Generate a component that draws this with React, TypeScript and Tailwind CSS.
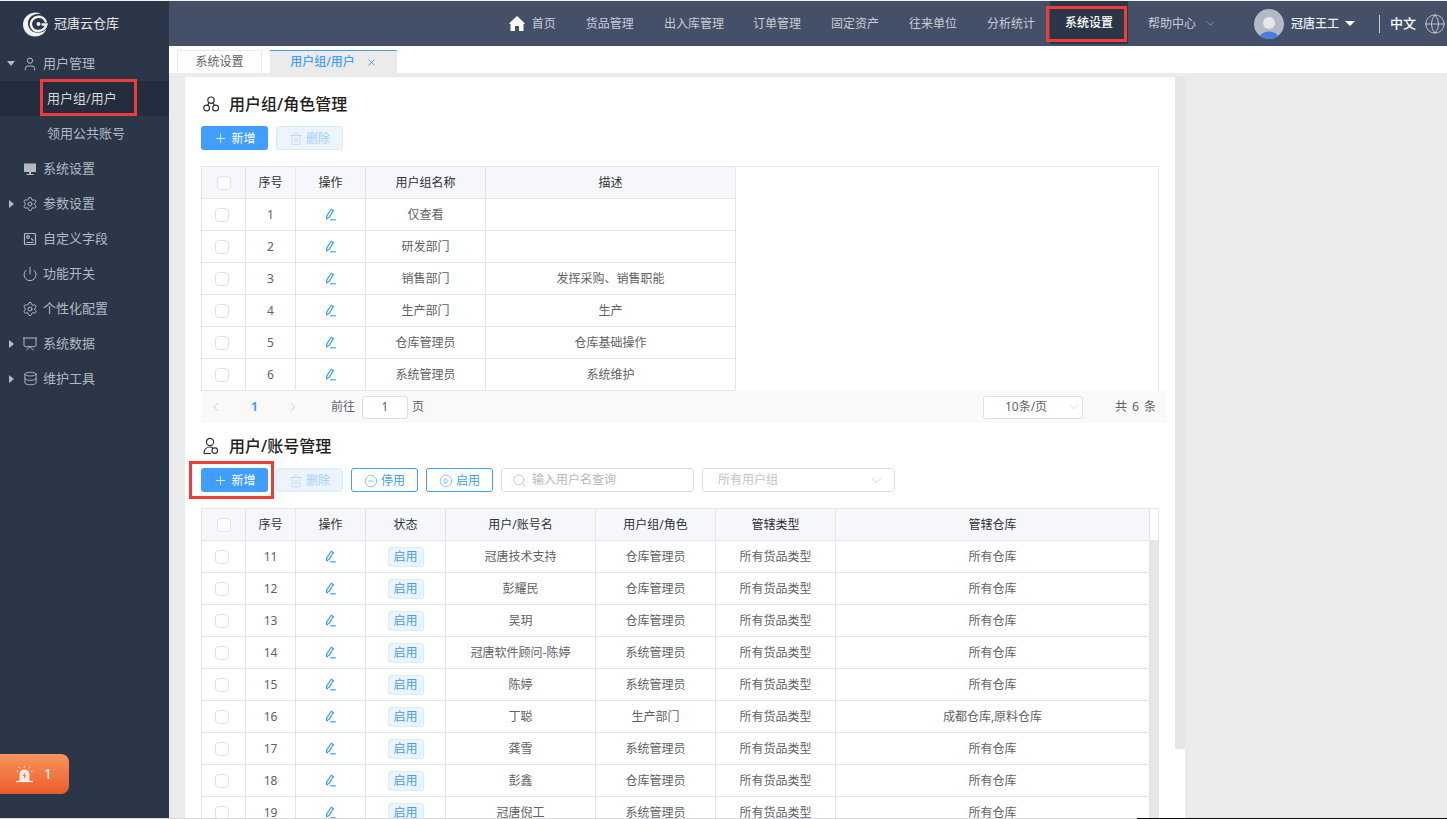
import {
  ChevronDown,
  ChevronLeft,
  ChevronRight,
  CircleMinus,
  CirclePlay,
  Database,
  Globe,
  Plus,
  Power,
  Presentation,
  Search,
  Settings,
  Trash2,
  User,
  X,
} from 'lucide-react'
import type { ReactNode } from 'react'

const NAV = ['货品管理', '出入库管理', '订单管理', '固定资产', '往来单位', '分析统计']

const GROUPS = [
  ['1', '仅查看', ''],
  ['2', '研发部门', ''],
  ['3', '销售部门', '发挥采购、销售职能'],
  ['4', '生产部门', '生产'],
  ['5', '仓库管理员', '仓库基础操作'],
  ['6', '系统管理员', '系统维护'],
]

const USERS = [
  ['11', '冠唐技术支持', '仓库管理员', '所有仓库'],
  ['12', '彭耀民', '仓库管理员', '所有仓库'],
  ['13', '吴玥', '仓库管理员', '所有仓库'],
  ['14', '冠唐软件顾问-陈婷', '系统管理员', '所有仓库'],
  ['15', '陈婷', '系统管理员', '所有仓库'],
  ['16', '丁聪', '生产部门', '成都仓库,原料仓库'],
  ['17', '龚雪', '系统管理员', '所有仓库'],
  ['18', '彭鑫', '仓库管理员', '所有仓库'],
  ['19', '冠唐倪工', '系统管理员', '所有仓库'],
]

function Logo() {
  return (
    <svg width="26" height="26" viewBox="0 0 26 26" fill="none" className="shrink-0">
      <path d="M19 2.5C10 -1 1 5 1 13.5C1 21 7 25.5 13 25.5C18.5 25.5 23 22.5 24.5 18C21 22 15 23 10.5 20.5C5.5 17.5 4.5 10 8.5 6C11.5 3 15.5 2.5 19 2.5Z" fill="#f2f2f2" />
      <path d="M24 11.5C23 7.5 19.5 5.5 16 5.8C11.5 6.2 8.5 10 9 14C9.5 18 13 20.5 17 20C20.5 19.5 23.5 17 24.5 13.5L19.5 13.5" stroke="#f2f2f2" strokeWidth="2.4" />
      <circle cx="16.5" cy="13" r="2" fill="#f2f2f2" />
    </svg>
  )
}

function MonitorIcon() {
  return (
    <svg width="14" height="14" viewBox="0 0 14 14" fill="#b4b9c2">
      <rect x="1" y="1.5" width="12" height="8.5" rx="0.5" />
      <rect x="6" y="10" width="2" height="2" />
      <rect x="3.5" y="12" width="7" height="1" />
    </svg>
  )
}

function FieldIcon() {
  return (
    <svg width="14" height="14" viewBox="0 0 14 14" fill="none" stroke="#b4b9c2" strokeWidth="1.2">
      <rect x="1.5" y="1.5" width="11" height="11" rx="1" />
      <circle cx="5" cy="5" r="1.3" />
      <path d="M3.5 10.5H10.5M8 6.5L10.5 8.5" />
    </svg>
  )
}

function EditIcon() {
  return (
    <svg width="13" height="13" viewBox="0 0 13 13" fill="none" stroke="#409eff" strokeWidth="1.2" className="mx-auto">
      <path d="M7.2 1.2L9.4 2.6L5 9.6L2.6 10.8L2.6 8.2Z" />
      <path d="M6.2 11.8H11.8" />
    </svg>
  )
}

function GroupIcon() {
  return (
    <svg width="18" height="18" viewBox="0 0 18 18" fill="none" stroke="#333" strokeWidth="1.2">
      <circle cx="9" cy="5.2" r="3.2" />
      <circle cx="4.6" cy="13" r="2.9" />
      <circle cx="13.6" cy="13" r="2.9" />
      <path d="M7 8L5.6 10.2M11 8L12.4 10.2" />
    </svg>
  )
}

function UserGroupIcon() {
  return (
    <svg width="18" height="18" viewBox="0 0 18 18" fill="none" stroke="#333" strokeWidth="1.2">
      <circle cx="8" cy="5" r="3.6" />
      <path d="M2 16.5C2 12.5 4.5 10 8 10C9 10 10 10.2 10.8 10.7" />
      <path d="M2 16.5H9" />
      <circle cx="12.8" cy="13.6" r="2.8" />
    </svg>
  )
}

function AlarmIcon() {
  return (
    <svg width="19" height="19" viewBox="0 0 19 19" fill="none">
      <path d="M4.5 16V9.5C4.5 6.7 6.7 4.5 9.5 4.5C12.3 4.5 14.5 6.7 14.5 9.5V16Z" fill="#fff" fillOpacity="0.85" />
      <path d="M10.2 7.5L7.8 11H9.4L8.8 14L11.2 10.4H9.6Z" fill="#ea5c2a" />
      <path d="M1 16.5H18" stroke="#fff" strokeWidth="1.2" />
      <path d="M9.5 0.5V2.5M4 2L5 3.6M15 2L14 3.6M1.5 6L3 7M17.5 6L16 7" stroke="#fff" strokeOpacity="0.8" strokeWidth="1" />
    </svg>
  )
}

function Avatar() {
  return (
    <svg width="30" height="30" viewBox="0 0 30 30" className="shrink-0">
      <clipPath id="avatar-clip">
        <circle cx="15" cy="15" r="15" />
      </clipPath>
      <g clipPath="url(#avatar-clip)">
        <rect width="30" height="30" fill="#b3b9c6" />
        <circle cx="15" cy="14" r="6" fill="#e6e7eb" />
        <ellipse cx="15" cy="30" rx="10" ry="7.5" fill="#4a7de0" />
      </g>
    </svg>
  )
}

function Caret({ open }: { open?: boolean }) {
  return (
    <span
      className={
        open
          ? 'h-0 w-0 border-x-[4px] border-t-[5px] border-x-transparent border-t-[#b4b9c2]'
          : 'h-0 w-0 border-y-[4px] border-l-[5px] border-y-transparent border-l-[#b4b9c2]'
      }
    />
  )
}

function SideItem({ icon, label, caret }: { icon: ReactNode; label: string; caret?: 'open' | 'closed' }) {
  return (
    <div className="flex h-[35px] items-center text-[13px] text-[#b4b9c2]">
      <span className="flex w-[22px] justify-center">
        {caret && <Caret open={caret === 'open'} />}
      </span>
      <span className="flex w-4 justify-center">{icon}</span>
      <span className="ml-[5px]">{label}</span>
    </div>
  )
}

function Sidebar() {
  const line = 'text-[#b4b9c2]'
  return (
    <aside className="relative flex w-[169px] shrink-0 flex-col bg-[#2b3648]">
      <div className="flex h-[45px] items-center pl-[22px]">
        <Logo />
        <span className="ml-[6px] text-[13px] text-[#e8e8e8]">冠唐云仓库</span>
      </div>
      <SideItem caret="open" icon={<User size={16} strokeWidth={1.5} className={line} />} label="用户管理" />
      <div className="flex h-[35px] items-center bg-[#232d3d] pl-[47px] text-[13px] text-[#d5d7db]">用户组/用户</div>
      <div className="flex h-[35px] items-center pl-[47px] text-[13px] text-[#b4b9c2]">领用公共账号</div>
      <SideItem icon={<MonitorIcon />} label="系统设置" />
      <SideItem caret="closed" icon={<Settings size={16} strokeWidth={1.5} className={line} />} label="参数设置" />
      <SideItem icon={<FieldIcon />} label="自定义字段" />
      <SideItem icon={<Power size={16} strokeWidth={1.5} className={line} />} label="功能开关" />
      <SideItem icon={<Settings size={16} strokeWidth={1.5} className={line} />} label="个性化配置" />
      <SideItem caret="closed" icon={<Presentation size={16} strokeWidth={1.5} className={line} />} label="系统数据" />
      <SideItem caret="closed" icon={<Database size={15} strokeWidth={1.5} className={line} />} label="维护工具" />

      <div className="absolute left-[40px] top-[78px] h-[37px] w-[97px] border-[3px] border-[#f33a3a]" />
      <div className="absolute left-0 top-[753px] flex h-[40px] w-[69px] items-center justify-end gap-[10px] rounded-r-lg bg-gradient-to-b from-[#f7935c] to-[#ea5b29] pr-[17px] text-sm text-white">
        <AlarmIcon />
        <span>1</span>
      </div>
    </aside>
  )
}

function Header() {
  return (
    <header className="flex h-[45px] shrink-0 items-start justify-end bg-[#435068] text-xs text-[#c9cdd4]">
      <div className="flex h-[45px] items-center pr-[15px]">
        <svg width="16" height="15" viewBox="0 0 16 15" fill="#fff">
          <path d="M8 0L16 7.5L14.5 8V15H10V10H6V15H1.5V8L0 7.5Z" />
        </svg>
        <span className="ml-[7px]">首页</span>
      </div>
      {NAV.map((n) => (
        <div key={n} className={`flex h-[45px] items-center pr-[15px] ${n === '订单管理' ? 'pl-[14px]' : 'pl-[15px]'}`}>{n}</div>
      ))}
      <div className="relative h-[43px] w-[78px]">
        <div className="flex h-full items-center justify-center bg-[#2b3648] font-medium text-white">系统设置</div>
        <div className="absolute -left-[4px] top-[5px] h-[36px] w-[81px] border-[3px] border-[#f33a3a]" />
      </div>
      <div className="flex h-[45px] items-center pl-5">
        帮助中心
        <ChevronDown size={13} strokeWidth={1} className="ml-2" />
      </div>
      <div className="ml-[37px] flex h-[45px] items-center text-[#eceef1]">
        <Avatar />
        <span className="ml-[7px] font-medium">冠唐王工</span>
        <span className="ml-[6px] h-0 w-0 border-x-[5px] border-t-[5px] border-x-transparent border-t-white" />
      </div>
      <div className="ml-[24px] flex h-[45px] items-center pr-[1px]">
        <span className="h-[18px] w-px bg-[#c9cdd4]" />
        <span className="ml-[10px] text-[13px] font-medium text-white">中文</span>
        <Globe size={22} strokeWidth={1} className="ml-[8px] text-[#c9cdd4]" />
      </div>
    </header>
  )
}

function Tabs() {
  return (
    <div className="flex h-[27px] shrink-0 items-end bg-white pl-2 text-xs">
      <div className="flex h-[23px] w-[85px] items-center justify-center border border-b-0 border-[#ebebeb] text-[#606266]">系统设置</div>
      <div className="ml-2 flex h-[23px] w-[127px] items-center justify-center border-t border-[#409eff] bg-[#ebebeb] font-medium text-[#409eff]">
        用户组/用户
        <X size={11} className="ml-[11px]" />
      </div>
    </div>
  )
}

function Check({ className }: { className?: string }) {
  return <span className={`block h-[14px] w-[14px] rounded-sm border border-[#dfe0e8] bg-white ${className ?? ''}`} />
}

function SectionTitle({ icon, text }: { icon: ReactNode; text: string }) {
  return (
    <h2 className="flex h-6 items-center gap-[9px] pl-[1px] text-base font-medium leading-6 text-[#222]">
      {icon}
      {text}
    </h2>
  )
}

function AddButton() {
  return (
    <button className="flex h-6 w-[67px] items-center justify-center gap-[3px] rounded-[3px] bg-[#409eff] pt-px text-xs text-white">
      <Plus size={15} strokeWidth={1.2} />
      新增
    </button>
  )
}

function DeleteButton() {
  return (
    <button className="flex h-6 w-[67px] items-center justify-center gap-[3px] rounded-[3px] border border-[#d9ecff] bg-[#ecf5ff] pt-px text-xs text-[#a0cfff]">
      <Trash2 size={14} strokeWidth={1.1} />
      删除
    </button>
  )
}

function OutlineButton({ icon, label }: { icon: ReactNode; label: string }) {
  return (
    <button className="flex h-6 w-[67px] items-center justify-center gap-[3px] rounded-[3px] border border-[#409eff] bg-white pt-px text-xs text-[#409eff]">
      {icon}
      {label}
    </button>
  )
}

const th = 'border border-[#e4e5ec] bg-[#f5f7fa] p-0 text-center text-xs font-normal text-[#303133]'
const td = 'h-[32px] border border-[#e4e5ec] p-0 text-center text-xs font-normal text-[#606266]'

function GroupTable() {
  return (
    <div className="h-[225px] w-[958px] border-r border-[#e9eaef] shadow-[inset_0_1px_0_#e9eaef]">
      <table className="w-[535px] table-fixed border-collapse">
        <colgroup>
          <col className="w-[44px]" />
          <col className="w-[50px]" />
          <col className="w-[70px]" />
          <col className="w-[120px]" />
          <col className="w-[250px]" />
        </colgroup>
        <thead>
          <tr className="h-[32px]">
            <th className={th}><Check className="ml-[15px]" /></th>
            <th className={th}>序号</th>
            <th className={th}>操作</th>
            <th className={th}>用户组名称</th>
            <th className={th}>描述</th>
          </tr>
        </thead>
        <tbody>
          {GROUPS.map(([id, name, desc]) => (
            <tr key={id}>
              <td className={td}><Check className="ml-[13px]" /></td>
              <td className={td}>{id}</td>
              <td className={td}><EditIcon /></td>
              <td className={td}>{name}</td>
              <td className={td}>{desc}</td>
            </tr>
          ))}
        </tbody>
      </table>
    </div>
  )
}

function Pagination() {
  return (
    <div className="flex h-[32px] w-[966px] items-center bg-[#f9f9fa] text-xs text-[#606266]">
      <ChevronLeft size={14} strokeWidth={1.5} className="ml-[8px] text-[#c0c4cc]" />
      <span className="ml-[28px] font-bold text-[#409eff]">1</span>
      <ChevronRight size={14} strokeWidth={1.5} className="ml-[28px] text-[#c0c4cc]" />
      <span className="ml-[31px]">前往</span>
      <span className="ml-[7px] flex h-[23px] w-[46px] items-center justify-center rounded-[3px] border border-[#dcdfe6] bg-white">1</span>
      <span className="ml-[4px]">页</span>
      <div className="ml-[559px] flex h-[23px] w-[100px] items-center rounded-[3px] border border-[#dcdfe6] bg-white pl-[21px]">
        10条/页
        <ChevronDown size={14} strokeWidth={1} className="ml-[20px] text-[#c0c4cc]" />
      </div>
      <span className="ml-[32px] tracking-[1px]">共 6 条</span>
    </div>
  )
}

function UserTable() {
  return (
    <div className="relative w-[958px]">
      <table className="w-[948px] table-fixed border-collapse">
        <colgroup>
          <col className="w-[44px]" />
          <col className="w-[50px]" />
          <col className="w-[70px]" />
          <col className="w-[80px]" />
          <col className="w-[150px]" />
          <col className="w-[120px]" />
          <col className="w-[120px]" />
          <col className="w-[314px]" />
        </colgroup>
        <thead>
          <tr className="h-[32px]">
            <th className={th}><Check className="ml-[15px]" /></th>
            <th className={th}>序号</th>
            <th className={th}>操作</th>
            <th className={th}>状态</th>
            <th className={th}>用户/账号名</th>
            <th className={th}>用户组/角色</th>
            <th className={th}>管辖类型</th>
            <th className={th}>管辖仓库</th>
          </tr>
        </thead>
        <tbody>
          {USERS.map(([id, name, role, stores]) => (
            <tr key={id}>
              <td className={td}><Check className="ml-[13px]" /></td>
              <td className={td}>{id}</td>
              <td className={td}><EditIcon /></td>
              <td className={td}>
                <span className="mx-auto flex h-5 w-9 items-center justify-center rounded-[3px] border border-[#d9ecff] bg-[#ecf5ff] text-[#409eff]">启用</span>
              </td>
              <td className={td}>{name}</td>
              <td className={td}>{role}</td>
              <td className={td}>所有货品类型</td>
              <td className={td}>{stores}</td>
            </tr>
          ))}
        </tbody>
      </table>
      <div className="absolute right-0 top-0 h-[33px] w-[10px] border-y border-r border-[#e4e5ec]" />
      <div className="absolute bottom-0 right-0 top-[33px] w-[10px] bg-[#e6e6e6]" />
    </div>
  )
}

function Panel() {
  return (
    <div className="relative h-[741px] w-[1000px] overflow-hidden bg-white pl-4 pt-[15px]">
      <div className="absolute right-0 top-0 h-[672px] w-[10px] bg-[#e5e5e5]" />
      <SectionTitle icon={<GroupIcon />} text="用户组/角色管理" />
      <div className="mt-[10px] flex gap-2">
        <AddButton />
        <DeleteButton />
      </div>
      <div className="mt-4">
        <GroupTable />
      </div>
      <Pagination />
      <div className="mt-[11px]">
        <SectionTitle icon={<UserGroupIcon />} text="用户/账号管理" />
      </div>
      <div className="mt-[10px] flex gap-2">
        <div className="relative">
          <AddButton />
          <div className="absolute -left-3 -top-[7px] h-[38px] w-[85px] border-[3px] border-[#f33a3a]" />
        </div>
        <DeleteButton />
        <OutlineButton icon={<CircleMinus size={14} strokeWidth={1} />} label="停用" />
        <OutlineButton icon={<CirclePlay size={14} strokeWidth={1} />} label="启用" />
        <div className="flex h-6 w-[193px] items-center rounded-[3px] border border-[#dcdfe6] pl-[10px] text-xs text-[#b4b8c0]">
          <Search size={15} strokeWidth={1.2} />
          <span className="ml-[5px]">输入用户名查询</span>
        </div>
        <div className="flex h-6 w-[193px] items-center justify-between rounded-[3px] border border-[#dcdfe6] pl-[15px] pr-[9px] text-xs text-[#c0c4cc]">
          所有用户组
          <ChevronDown size={17} strokeWidth={1} />
        </div>
      </div>
      <div className="mt-4">
        <UserTable />
      </div>
    </div>
  )
}

export default function App() {
  return (
    <div className="flex h-[819px] w-[1447px] flex-col overflow-hidden bg-white [font-family:'Noto_Sans','Noto_Sans_CJK_SC',sans-serif]">
      <div className="flex h-[1px] shrink-0 bg-[#f4f4f4]" />
      <div className="flex h-[817px] shrink-0">
        <Sidebar />
        <div className="flex min-w-0 flex-1 flex-col">
          <Header />
          <Tabs />
          <div className="flex-1 overflow-hidden bg-[#ebebeb] pl-4 pt-1">
            <Panel />
          </div>
        </div>
      </div>
      <div className="flex h-[1px] shrink-0">
        <div className="w-[1137px] bg-[#d9d9d9]" />
        <div className="flex-1 bg-[#111]" />
      </div>
    </div>
  )
}
